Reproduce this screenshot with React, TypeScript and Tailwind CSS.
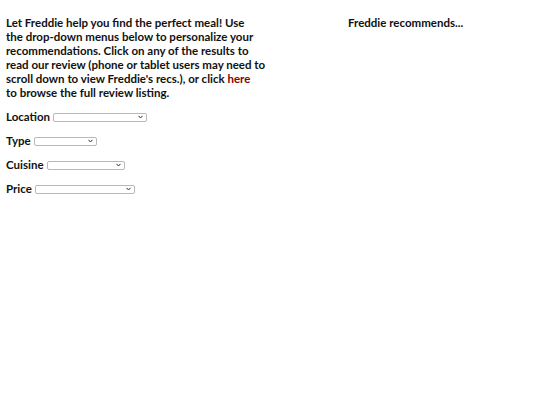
import React from "react";

function FakeSelect({ w }: { w: string }) {
  return (
    <span className={`inline-flex items-center justify-end ${w} h-[9px] border border-[#b8b8b8] rounded-[2px] bg-white align-middle pr-[3px]`}>
      <svg width="5" height="4" viewBox="0 0 5 4">
        <path d="M0.5 0.8 L2.5 3 L4.5 0.8" fill="none" stroke="#333" strokeWidth="1" />
      </svg>
    </span>
  );
}

export default function App() {
  return (
    <div className="w-[540px] h-[405px] bg-white text-[#111] font-['Lato',sans-serif] font-bold text-[11.5px] leading-[14px] flex">
      <div className="w-[342px] pl-[6px] pt-[16px]">
        <p className="whitespace-nowrap">
          Let Freddie help you find the perfect meal! Use
          <br />
          the drop-down menus below to personalize your
          <br />
          recommendations. Click on any of the results to
          <br />
          read our review (phone or tablet users may need to
          <br />
          scroll down to view Freddie's recs.), or click <a className="text-[#8b0000]">here</a>
          <br />
          to browse the full review listing.
        </p>
        <div className="mt-[10px] flex flex-col gap-[10px]">
          <div className="flex items-center gap-[3px] h-[14px]">
            <span>Location</span>
            <FakeSelect w="w-[94px]" />
          </div>
          <div className="flex items-center gap-[3px] h-[14px]">
            <span>Type</span>
            <FakeSelect w="w-[63px]" />
          </div>
          <div className="flex items-center gap-[3px] h-[14px]">
            <span>Cuisine</span>
            <FakeSelect w="w-[78px]" />
          </div>
          <div className="flex items-center gap-[3px] h-[14px]">
            <span>Price</span>
            <FakeSelect w="w-[100px]" />
          </div>
        </div>
      </div>
      <div className="pl-[6px] pt-[16px]">Freddie recommends...</div>
    </div>
  );
}
